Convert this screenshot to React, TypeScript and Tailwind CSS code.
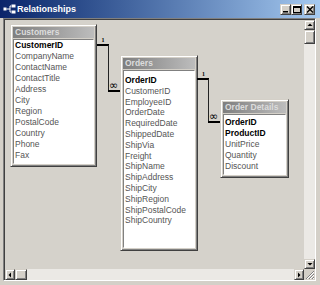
import React from "react";

type Field = { name: string; key?: boolean };

const customers: Field[] = [
  { name: "CustomerID", key: true },
  { name: "CompanyName" },
  { name: "ContactName" },
  { name: "ContactTitle" },
  { name: "Address" },
  { name: "City" },
  { name: "Region" },
  { name: "PostalCode" },
  { name: "Country" },
  { name: "Phone" },
  { name: "Fax" },
];

const orders: Field[] = [
  { name: "OrderID", key: true },
  { name: "CustomerID" },
  { name: "EmployeeID" },
  { name: "OrderDate" },
  { name: "RequiredDate" },
  { name: "ShippedDate" },
  { name: "ShipVia" },
  { name: "Freight" },
  { name: "ShipName" },
  { name: "ShipAddress" },
  { name: "ShipCity" },
  { name: "ShipRegion" },
  { name: "ShipPostalCode" },
  { name: "ShipCountry" },
];

const orderDetails: Field[] = [
  { name: "OrderID", key: true },
  { name: "ProductID", key: true },
  { name: "UnitPrice" },
  { name: "Quantity" },
  { name: "Discount" },
];

// classic 3D raised edge
const raised =
  "border border-t-[#d4d0c8] border-l-[#d4d0c8] border-r-[#404040] border-b-[#404040] shadow-[inset_1px_1px_0_#ffffff,inset_-1px_-1px_0_#808080]";

const FieldList: React.FC<{
  title: string;
  fields: Field[];
  className: string;
  listClass: string;
  rowClass: string;
}> = ({ title, fields, className, listClass, rowClass }) => (
  <div className={`absolute flex flex-col bg-[#d4d0c8] p-[2px] ${raised} ${className}`}>
    <div className="h-[11px] shrink-0 whitespace-nowrap bg-linear-to-r from-[#7f7f7f] to-[#bdbdbd] pl-[2px] text-[8.5px] font-bold leading-[11px] text-[#dcdcdc]">
      {title}
    </div>
    <div
      className={`mt-[1px] flex-1 overflow-hidden border border-t-[#808080] border-l-[#808080] border-r-white border-b-white bg-white pl-[1px] ${listClass}`}
    >
      {fields.map((f) => (
        <div
          key={f.name}
          className={`${rowClass} whitespace-nowrap text-[8.5px] ${
            f.key ? "font-bold text-black" : "text-[#555555]"
          }`}
        >
          {f.name}
        </div>
      ))}
    </div>
  </div>
);

const ScrollButton: React.FC<{ dir: "up" | "down" | "left" | "right"; className: string }> = ({
  dir,
  className,
}) => {
  const pts = {
    up: "0.5,4 5.5,4 3,1.5",
    down: "0.5,2 5.5,2 3,4.5",
    left: "4,0.5 4,5.5 1.5,3",
    right: "2,0.5 2,5.5 4.5,3",
  }[dir];
  return (
    <div className={`flex shrink-0 items-center justify-center bg-[#d4d0c8] ${raised} ${className}`}>
      <svg width="6" height="6" viewBox="0 0 6 6">
        <polygon points={pts} fill="#000" />
      </svg>
    </div>
  );
};

const WinButton: React.FC<{ kind: "min" | "max" | "close" }> = ({ kind }) => (
  <div className={`flex h-[11px] w-[11px] items-center justify-center bg-[#d4d0c8] ${raised}`}>
    <svg width="8" height="7" viewBox="0 0 8 7">
      {kind === "min" && <rect x="1" y="5" width="5" height="1.5" fill="#000" />}
      {kind === "max" && (
        <>
          <rect x="0.5" y="0.5" width="7" height="6" fill="none" stroke="#000" strokeWidth="1" />
          <rect x="0.5" y="0.5" width="7" height="1.5" fill="#000" />
        </>
      )}
      {kind === "close" && (
        <path d="M1 0.5 L7 6.5 M7 0.5 L1 6.5" stroke="#000" strokeWidth="1.4" />
      )}
    </svg>
  </div>
);

const RelIcon = () => (
  <svg width="13" height="11" viewBox="0 0 13 11">
    <rect x="0.5" y="3.5" width="3" height="3" fill="#fff" />
    <path d="M3.5 5 H7 M7 2 V8 M7 2 H8 M7 8 H8" stroke="#fff" strokeWidth="1" />
    <rect x="8.5" y="0.5" width="4" height="3" fill="#fff" />
    <rect x="8.5" y="6.5" width="4" height="3" fill="#fff" />
  </svg>
);

const Relations = () => (
  <svg className="absolute inset-0" width="299" height="249" viewBox="0 0 299 249">
    {/* Customers -> Orders */}
    <rect x="92" y="24" width="12" height="2" fill="#000" />
    <rect x="103" y="25" width="1" height="46" fill="#222" />
    <rect x="103" y="70" width="12" height="2" fill="#000" />
    <text x="96.5" y="22" fontSize="6" fontWeight="bold" fontFamily="'Liberation Serif', serif" fill="#000">
      1
    </text>
    <text x="104" y="69" fontSize="11" fontFamily="'DejaVu Sans', sans-serif" fill="#000">
      ∞
    </text>
    {/* Orders -> Order Details */}
    <rect x="192" y="58" width="12" height="2" fill="#000" />
    <rect x="203" y="59" width="1" height="43" fill="#222" />
    <rect x="203" y="101" width="12" height="2" fill="#000" />
    <text x="197" y="56" fontSize="6" fontWeight="bold" fontFamily="'Liberation Serif', serif" fill="#000">
      1
    </text>
    <text x="204" y="100" fontSize="11" fontFamily="'DejaVu Sans', sans-serif" fill="#000">
      ∞
    </text>
  </svg>
);

export default function App() {
  return (
    <div className="flex h-[285px] w-[320px] flex-col overflow-hidden bg-[#d4d0c8] font-['Liberation_Sans',Arial,sans-serif]">
      {/* Title bar */}
      <div className="flex h-[18px] shrink-0 items-start bg-linear-to-r from-[#0a246a] to-[#a6caf0] pl-[3px] pr-[5px]">
        <div className="mt-[4px]">
          <RelIcon />
        </div>
        <span className="ml-[1px] mt-[3px] text-[9px] font-bold leading-[12px] text-white">
          Relationships
        </span>
        <div className="ml-auto mt-[4px] flex">
          <WinButton kind="min" />
          <WinButton kind="max" />
          <div className="ml-[2px]">
            <WinButton kind="close" />
          </div>
        </div>
      </div>

      {/* Client area */}
      <div className="flex flex-1 flex-col pb-[4px] pl-[3px] pr-[4px]">
        <div className="grid flex-1 grid-cols-[1fr_11px] grid-rows-[1fr_11px] border border-t-[#808080] border-l-[#808080] border-r-white border-b-white pl-[1px] pt-[1px] shadow-[inset_1px_1px_0_#404040]">
          {/* Canvas */}
          <div className="relative overflow-hidden bg-[#d5d2cb]">
            <FieldList
              title="Customers"
              fields={customers}
              className="left-[5px] top-[4px] h-[143px] w-[87px]"
              listClass="pt-0"
              rowClass="h-[11px] leading-[11px]"
            />
            <FieldList
              title="Orders"
              fields={orders}
              className="left-[115px] top-[35px] h-[196px] w-[78px]"
              listClass="pt-[4px]"
              rowClass="h-[10.8px] leading-[10.8px]"
            />
            <FieldList
              title="Order Details"
              fields={orderDetails}
              className="left-[215px] top-[79px] h-[79px] w-[69px]"
              listClass="pt-[2px]"
              rowClass="h-[11px] leading-[11px]"
            />
            <Relations />
          </div>

          {/* Vertical scrollbar */}
          <div className="flex flex-col bg-[#ebe9e5]">
            <ScrollButton dir="up" className="h-[10px] w-full" />
            <div className={`h-[14px] w-full shrink-0 bg-[#d4d0c8] ${raised}`} />
            <div className="flex-1" />
            <ScrollButton dir="down" className="h-[10px] w-full" />
          </div>

          {/* Horizontal scrollbar */}
          <div className="flex bg-[#ebe9e5]">
            <ScrollButton dir="left" className="h-full w-[10px]" />
            <div className={`h-full w-[12px] shrink-0 bg-[#d4d0c8] ${raised}`} />
            <div className="flex-1" />
            <ScrollButton dir="right" className="h-full w-[10px]" />
          </div>

          {/* Size grip */}
          <div className="flex items-end justify-end bg-[#d4d0c8]">
            <svg width="11" height="11" viewBox="0 0 11 11">
              <path d="M10 2 L2 10 M10 5 L5 10 M10 8 L8 10" stroke="#808080" strokeWidth="1" />
              <path d="M10 3 L3 10 M10 6 L6 10 M10 9 L9 10" stroke="#ffffff" strokeWidth="1" />
            </svg>
          </div>
        </div>
      </div>
    </div>
  );
}
